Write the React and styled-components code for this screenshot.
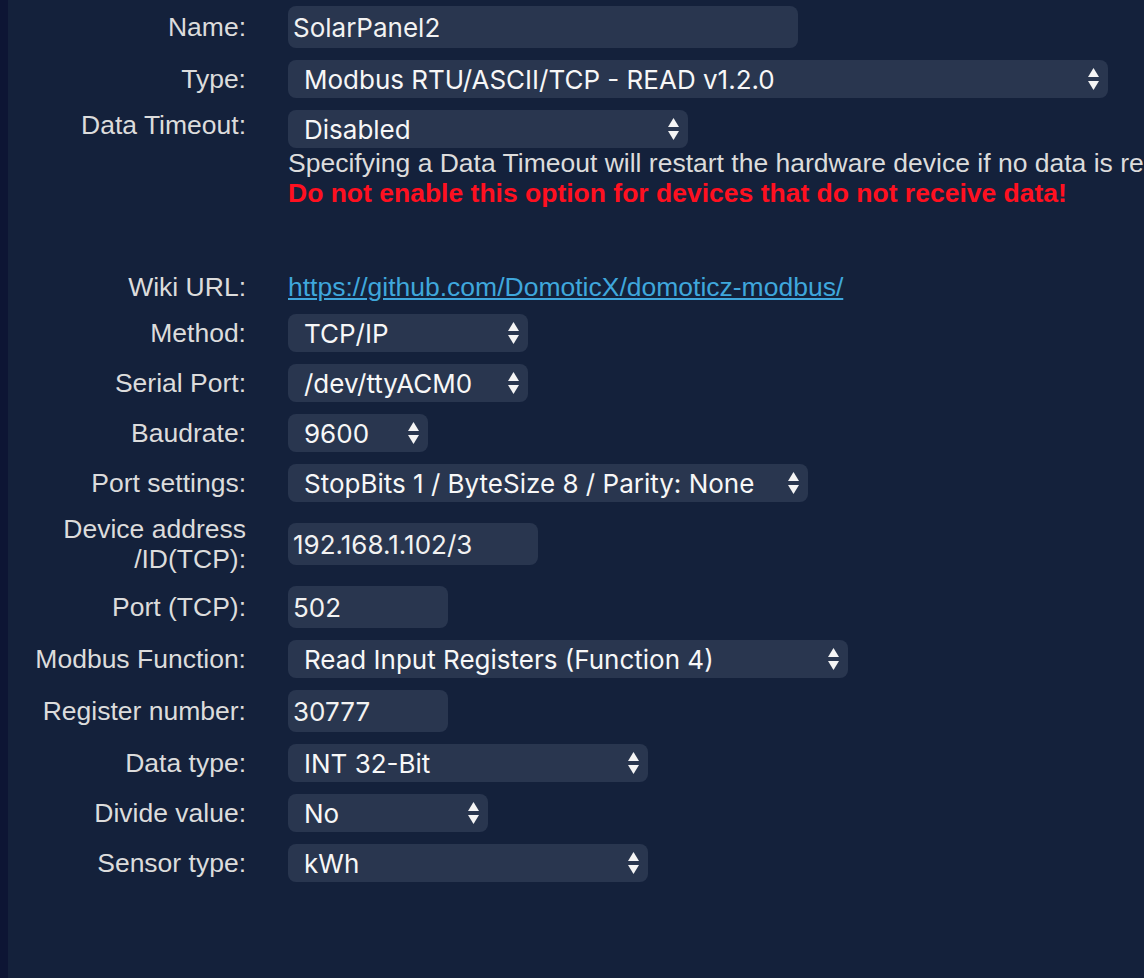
import React from 'react'
import styled, { createGlobalStyle } from 'styled-components'

const GlobalStyle = createGlobalStyle`
	html, body {
		margin: 0;
		padding: 0;
		background: #14213b;
		overflow: hidden;
	}
`

const Page = styled.div`
	display: flex;
	min-height: 978px;
`
const Strip = styled.div`
	width: 8px;
	flex-shrink: 0;
	background: #0d1534;
`
const Form = styled.div`
	flex: 1;
	min-width: 0;
	padding-top: 6px;
	display: flex;
	flex-direction: column;
	gap: 12px;
`
const Row = styled.div`
	display: grid;
	grid-template-columns: 238px 1fr;
	column-gap: 42px;
	align-items: ${({ $top }) => ($top ? 'start' : 'center')};
	margin-top: ${({ $spaced }) => ($spaced ? '52px' : '0')};
`
const Label = styled.div`
	text-align: right;
	font-family: 'Liberation Sans', Arial, sans-serif;
	font-size: 26.5px;
	line-height: 30px;
	color: #dcdcdc;
	white-space: nowrap;
`
const Field = styled.div`
	display: flex;
	flex-direction: column;
	align-items: flex-start;
	min-width: 0;
`
const TextInput = styled.input`
	box-sizing: border-box;
	width: ${({ $w }) => $w}px;
	height: 42px;
	border: none;
	outline: none;
	border-radius: 8px;
	background: #29364f;
	padding: 0 5px;
	font-family: Inter, 'Noto Sans', sans-serif;
	font-size: 26px;
	color: #f2f2f2;
`
const SelectBox = styled.div`
	box-sizing: border-box;
	width: ${({ $w }) => $w}px;
	height: 38px;
	border-radius: 8px;
	background: #29364f;
	padding: 0 9px 0 16px;
	display: flex;
	align-items: center;
	justify-content: space-between;
	font-family: Inter, 'Noto Sans', sans-serif;
	font-size: 26px;
	color: #f7f7f7;
`
const SelectText = styled.span`
	white-space: nowrap;
`
const Help = styled.div`
	font-family: 'Liberation Sans', Arial, sans-serif;
	font-size: 26.5px;
	line-height: 30px;
	color: #dcdcdc;
	white-space: nowrap;
`
const Warning = styled(Help)`
	font-weight: bold;
	color: #ff1020;
`
const WikiLink = styled.a`
	font-family: 'Liberation Sans', Arial, sans-serif;
	font-size: 26.5px;
	line-height: 30px;
	color: #3fa7dc;
	text-decoration: underline;
	white-space: nowrap;
`

const Arrows = () => (
	<svg width="11" height="22" viewBox="0 0 11 22">
		<polygon points="5.5,0 11,9 0,9" fill="#f4f4f4" />
		<polygon points="0,13 11,13 5.5,22" fill="#f4f4f4" />
	</svg>
)

const Select = ({ value, width }) => (
	<SelectBox $w={width}>
		<SelectText>{value}</SelectText>
		<Arrows />
	</SelectBox>
)

const fields = [
	{ label: ['Method:'], type: 'select', value: 'TCP/IP', width: 240 },
	{ label: ['Serial Port:'], type: 'select', value: '/dev/ttyACM0', width: 240 },
	{ label: ['Baudrate:'], type: 'select', value: '9600', width: 140 },
	{ label: ['Port settings:'], type: 'select', value: 'StopBits 1 / ByteSize 8 / Parity: None', width: 520 },
	{ label: ['Device address', '/ID(TCP):'], type: 'input', value: '192.168.1.102/3', width: 250 },
	{ label: ['Port (TCP):'], type: 'input', value: '502', width: 160 },
	{ label: ['Modbus Function:'], type: 'select', value: 'Read Input Registers (Function 4)', width: 560 },
	{ label: ['Register number:'], type: 'input', value: '30777', width: 160 },
	{ label: ['Data type:'], type: 'select', value: 'INT 32-Bit', width: 360 },
	{ label: ['Divide value:'], type: 'select', value: 'No', width: 200 },
	{ label: ['Sensor type:'], type: 'select', value: 'kWh', width: 360 },
]

const App = () => {
	return (
		<>
			<GlobalStyle />
			<Page>
				<Strip />
				<Form>
					<Row>
						<Label>Name:</Label>
						<TextInput $w={510} value="SolarPanel2" readOnly />
					</Row>
					<Row>
						<Label>Type:</Label>
						<Select value="Modbus RTU/ASCII/TCP - READ v1.2.0" width={820} />
					</Row>
					<Row $top>
						<Label>Data Timeout:</Label>
						<Field>
							<Select value="Disabled" width={400} />
							<Help>Specifying a Data Timeout will restart the hardware device if no data is received within the specified time.</Help>
							<Warning>Do not enable this option for devices that do not receive data!</Warning>
						</Field>
					</Row>
					<Row $spaced>
						<Label>Wiki URL:</Label>
						<Field>
							<WikiLink href="#">https://github.com/DomoticX/domoticz-modbus/</WikiLink>
						</Field>
					</Row>
					{fields.map(f => (
						<Row key={f.label.join(' ')}>
							<Label>
								{f.label.map(l => (
									<div key={l}>{l}</div>
								))}
							</Label>
							{f.type === 'select' ? (
								<Select value={f.value} width={f.width} />
							) : (
								<TextInput $w={f.width} value={f.value} readOnly />
							)}
						</Row>
					))}
				</Form>
			</Page>
		</>
	)
}

export default App
